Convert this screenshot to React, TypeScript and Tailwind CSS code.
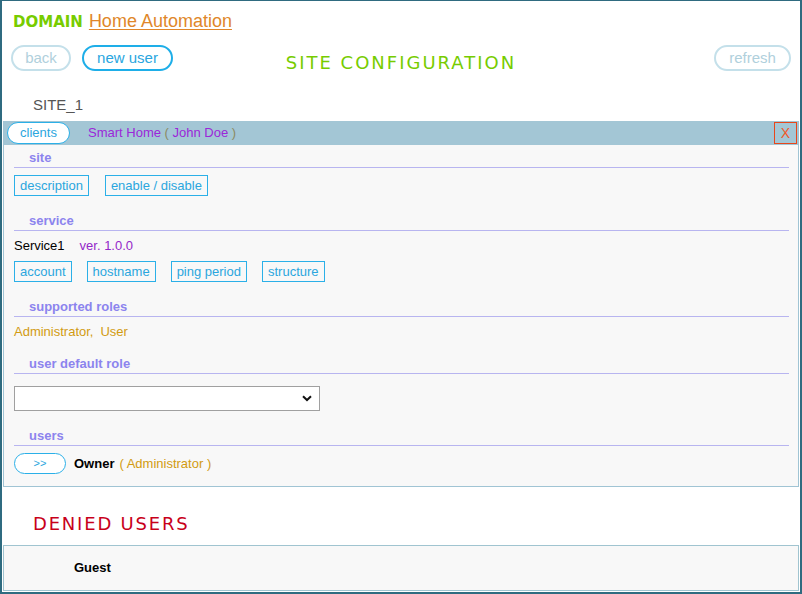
import React from "react";

const sans = "font-['Liberation_Sans',Arial,sans-serif]";
const dv = "font-['DejaVu_Sans',Verdana,sans-serif]";

function SectionHeader({ label, mt }: { label: string; mt: string }) {
  return (
    <div className={`${mt} leading-[15px] pb-[2px] border-b border-[#b8b5f0] pl-[15px] font-bold text-[#8c84ee]`}>
      {label}
    </div>
  );
}

function BoxButton({ label }: { label: string }) {
  return (
    <div className="h-[21px] border border-[#2bb0e8] px-[5px] leading-[19px] text-[#2ba6de]">{label}</div>
  );
}

export default function App() {
  return (
    <div className={`w-[802px] h-[594px] bg-white border-x-2 border-t border-b-2 border-[#2f6b80] overflow-hidden ${sans} text-[13px]`}>
      {/* domain row */}
      <div className="pl-[11px] pt-[9px] h-[32px] flex items-baseline gap-[6px] leading-[22px]">
        <span className={`${dv} font-bold text-[15px] text-[#77cc00]`}>DOMAIN</span>
        <span className="text-[18px] text-[#e0872a] underline underline-offset-2">Home Automation</span>
      </div>

      {/* buttons row */}
      <div className="mt-[12px] px-[9px] grid grid-cols-[1fr_auto_1fr] items-start">
        <div className="flex gap-[11px]">
          <div className="w-[60px] h-[26px] rounded-full border-2 border-[#c4e0ea] text-[#b0d0dc] text-[15px] flex items-center justify-center">back</div>
          <div className="w-[91px] h-[26px] rounded-full border-2 border-[#1eaee8] text-[#2aa6e0] text-[15px] flex items-center justify-center">new user</div>
        </div>
        <div className={`${dv} mt-[7px] text-[18px] leading-[22px] tracking-[2px] text-[#77cc00]`}>SITE CONFIGURATION</div>
        <div className="flex justify-end">
          <div className="w-[77px] h-[26px] rounded-full border-2 border-[#c4e0ea] text-[#b0d0dc] text-[15px] flex items-center justify-center">refresh</div>
        </div>
      </div>

      <div className="mt-[22px] pl-[31px] text-[15px] leading-[18px] text-[#555555]">SITE_1</div>

      {/* site panel */}
      <div className="mt-[7px] mx-[1px] border-x border-b border-[#a0c4d4]">
        <div className="h-[24px] bg-[#a3c6d5] flex items-center">
          <div className="ml-[3px] w-[63px] h-[22px] rounded-full border border-[#2bb0e8] bg-white text-[#2ba6de] flex items-center justify-center">clients</div>
          <div className="ml-[18px] text-[#9b27d9]">
            Smart Home <span className="text-[#8b8a62]">(</span> John Doe <span className="text-[#8b8a62]">)</span>
          </div>
          <div className="ml-auto mr-[1px] w-[23px] h-[22px] border border-[#e8461a] text-[14px] text-[#f0582a] flex items-center justify-center">X</div>
        </div>
        <div className="bg-[#f8f8f8] pl-[10px] pr-[9px] pb-[12px]">
          <SectionHeader label="site" mt="pt-[5px]" />
          <div className="mt-[7px] flex gap-[16px]">
            <BoxButton label="description" />
            <BoxButton label="enable / disable" />
          </div>

          <SectionHeader label="service" mt="mt-[17px]" />
          <div className="mt-[7px] leading-[15px] flex gap-[15px]">
            <span className="text-black">Service1</span>
            <span className="text-[#9427c8]">ver. 1.0.0</span>
          </div>
          <div className="mt-[8px] flex gap-[15px]">
            <BoxButton label="account" />
            <BoxButton label="hostname" />
            <BoxButton label="ping period" />
            <BoxButton label="structure" />
          </div>

          <SectionHeader label="supported roles" mt="mt-[17px]" />
          <div className="mt-[7px] leading-[15px] text-[#d29b12] flex">
            <span>Administrator,</span>
            <span className="ml-[7px]">User</span>
          </div>

          <SectionHeader label="user default role" mt="mt-[17px]" />
          <div className="mt-[12px] w-[306px] h-[25px] border border-[#a0a0a0] bg-white flex items-center justify-end pr-[7px]">
            <svg width="10" height="7" viewBox="0 0 10 7">
              <path d="M1 1.2 L5 5 L9 1.2" fill="none" stroke="#111" strokeWidth="2" />
            </svg>
          </div>

          <SectionHeader label="users" mt="mt-[17px]" />
          <div className="mt-[7px] flex items-center">
            <div className="w-[52px] h-[21px] rounded-full border border-[#2bb0e8] bg-white text-[#2ba6de] text-[11px] flex items-center justify-center">&gt;&gt;</div>
            <span className="ml-[8px] font-bold text-black">Owner</span>
            <span className="ml-[5px] text-[#d29b12]">( Administrator )</span>
          </div>
        </div>
      </div>

      <div className={`${dv} mt-[26px] pl-[31px] text-[18px] leading-[22px] tracking-[0.1em] text-[#c8001a]`}>DENIED USERS</div>

      <div className="mt-[10px] mx-[1px] h-[46px] border border-[#a0c4d0] bg-[#f8f8f8] flex items-center pl-[70px]">
        <span className="font-bold text-black">Guest</span>
      </div>
    </div>
  );
}
